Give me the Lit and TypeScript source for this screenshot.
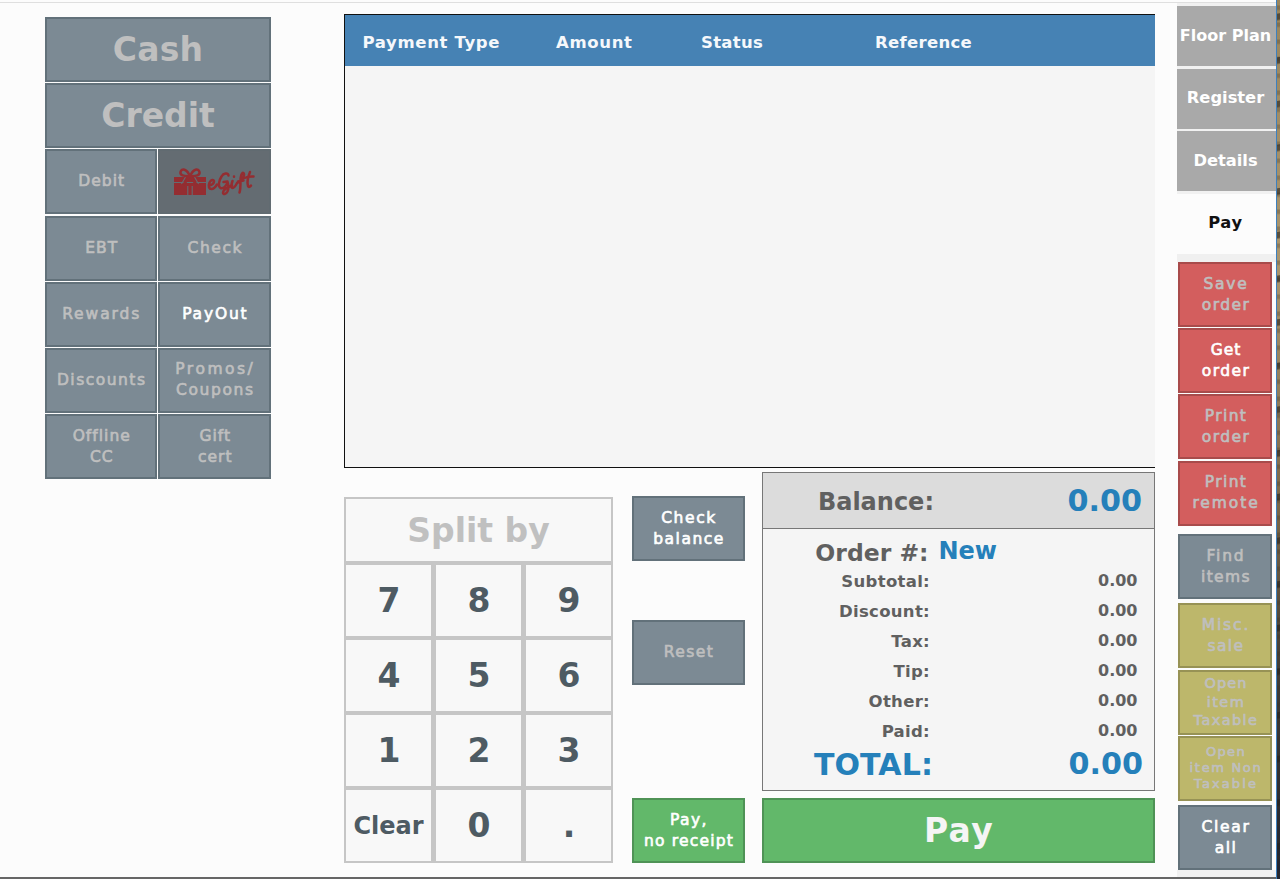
import { LitElement, html, css } from "lit";
import { customElement, property } from "lit/decorators.js";
import { styleMap } from "lit/directives/style-map.js";

type Key = { lines: string[]; tone?: string; on?: boolean; size?: string; icon?: boolean };

const TRACKING: Record<string, number> = {
  Debit: 1, EBT: 1, Check: 1.6, Rewards: 1.9, PayOut: 1.8, Discounts: 1.5, "Promos/": 2.5, Coupons: 1.6,
  Offline: 1, CC: 1, Gift: 1, cert: 1, Save: 1.8, Get: 0.9, remote: 1.9, Find: 1.8, "Misc.": 1.9, Clear: 1.7,
  balance: 1.5, "no receipt": 1.2, Open: 1.1, Cash: 0.2, Credit: 0, "Pay": 1.3,
};

@customElement("pos-button")
class PosButton extends LitElement {
  @property({ type: Array }) lines: string[] = [];
  @property() tone = "slate";
  @property() size = "small";
  @property({ type: Boolean }) on = false;
  @property({ type: Boolean }) icon = false;

  static styles = css`
    :host { display: block; min-width: 0; }
    .btn {
      box-sizing: border-box; width: 100%; height: 100%; border: 2px solid; display: flex;
      flex-direction: column; align-items: center; justify-content: center;
      text-align: center; white-space: nowrap; color: #bfbfbf; padding: 0 0 0 2px;
      font: 15.5px/21px "DejaVu Sans", sans-serif; -webkit-text-stroke: 0.65px currentColor;
    }
    .slate { background: #7c8a94; border-color: #62717a; }
    .red { background: #d35e5e; border-color: #a84b4b; }
    .olive { background: #bdb76b; border-color: #979255; }
    .green { background: #62b86a; border-color: #4f9356; }
    .dark { background: #646c72; border-color: #616b71; padding: 0; }
    .on { color: #fff; }
    .big { font: bold 33px/40px "DejaVu Sans", sans-serif; -webkit-text-stroke: 0; padding-left: 1px; }
    .tight { font-size: 14.5px; line-height: 18.7px; }
    .dense { font-size: 13px; line-height: 16.3px; }
    .big.on { color: #f5f5f5; }
    .gift { display: block; width: 82px; height: 30px; }
  `;

  render() {
    const extra = this.size === "dense" ? 0.7 : 0;
    return html`<div class="btn ${this.tone} ${this.size} ${this.on ? "on" : ""}">
      ${this.icon
        ? html`<svg class="gift" viewBox="0 0 82 30">
            <path fill="#942d31" d="M1 10h32v5H1zM1 16h32v12H1z" />
            <g fill="none" stroke="#646c72" stroke-width="1.1">
              <path d="M14.800 19v9M19.200 19v9M12.500 10l-4 7M21.500 10l4 7" />
            </g>
            <g fill="none" stroke="#942d31" stroke-width="2.5" stroke-linecap="round" stroke-linejoin="round">
              <path d="M17 9.500C13 9 6.500 9 7.500 5S14 1.500 17 9.500C20 1.500 25.500 1 26.500 5S21 9 17 9.500M15.500 10c-1 3-3 5.500-4.500 7M18.500 10c1 3 3 5.500 4.500 7" />
              <path d="M36 18.500c3-.5 5-2 5-4.200s-3-1.500-4.500 1.200c-1.500 4-.5 6.500 2 6.500 2.500 0 4-2 5.500-4.500" />
              <path d="M55.500 8.500c-.5-3-5-2.500-7 1-3 4.500-3.500 10-1 11.500 3 1 6-2 7-6 1 3 1.500 6 0 9.500-1.500 3-4.500 3.500-4.500 1s4-5 9-7M50.500 15l4-.5" />
              <path d="M59.500 14c-1 3-2 7 0 7s3-2 4.500-5M61 9.500v.2" />
              <path d="M66 15.500c4-2 6-8.500 4.500-9.500-2-1-3 4-3 8 0 5 0 9-1 11.500M65 14.500l5.500-1" />
              <path d="M77 5c-2 5-3 11-2 14 .6 1.500 2 1 3-.5M71.500 11c3-1.500 6-1.700 9-1.500" />
            </g>
          </svg>`
        : this.lines.map(
            (l) => html`<span style=${styleMap({ letterSpacing: `${(TRACKING[l] ?? 1.4) + (l === "Taxable" ? extra : extra / 2.5)}px` })}>${l}</span>`
          )}
    </div>`;
  }
}

@customElement("app-root")
class AppRoot extends LitElement {
  static styles = css`
    :host { display: block; }
    .page {
      box-sizing: border-box; width: 1280px; height: 879px; background: #fcfcfc; overflow: hidden;
      display: grid; grid-template-columns: 344px 811px 22px 99px 4px; grid-template-rows: 3px 873.5px 2.5px;
      font: bold 16.5px "DejaVu Sans", sans-serif;
    }
    .rule { grid-column: 1 / 5; border-bottom: 1px solid #dfdfdf; box-sizing: border-box; }
    .foot { grid-column: 1 / 5; grid-row: 3; background: #666; }
    .tenders {
      grid-column: 1; grid-row: 2; padding: 14px 0 0 44.5px; width: 226px; align-content: start;
      display: grid; grid-template-columns: 1fr 1fr; grid-auto-rows: 65px; gap: 1.2px;
    }
    .wide { grid-column: span 2; }
    .main { grid-column: 2; grid-row: 2; padding-top: 11px; display: flex; flex-direction: column; }
    .ledger {
      box-sizing: border-box; height: 454px; background: #f5f5f5; border: 1px solid #111; border-right: 0;
    }
    .head {
      display: grid; grid-template-columns: 193.5px 145px 174px 1fr; padding: 3px 0 0 17.5px; height: 51px;
      box-sizing: border-box; align-items: center; background: #4682b4; color: #f5f8fb; letter-spacing: 0.65px;
    }
    .head .slim { letter-spacing: 0.3px; }
    .lower { display: grid; grid-template-columns: 269px 113px 393px; column-gap: 18px; height: 395px; }
    .pad {
      margin-top: 29px; box-sizing: border-box; height: 366px; padding: 2px; background: #c6c6c6;
      display: grid; grid-template-columns: repeat(3, 85px); grid-template-rows: 62px repeat(4, 71px); gap: 4px 5px;
      color: #4e5b63; font-size: 33px;
    }
    .cell { background: #f8f8f8; display: flex; align-items: center; justify-content: center; padding-left: 1px; }
    .split { grid-column: span 3; color: #c0c0c0; padding: 0; }
    .word { font-size: 24px; padding: 0; }
    .mid {
      display: grid; grid-template-rows: 65px 59px 65px 113px 65px; align-content: start;
      padding-top: 28px; margin: 0 -0.5px 0 0.5px;
    }
    .mid .b { grid-row: 3; }
    .mid .c { grid-row: 5; }
    .right { padding-top: 4px; display: flex; flex-direction: column; }
    .sum { box-sizing: border-box; height: 319px; border: 1px solid #777; background: #f5f5f5; color: #606060; }
    .line {
      display: grid; grid-template-columns: 167px 1fr; height: 30px; align-items: center; padding-right: 16.5px;
      letter-spacing: 0.3px;
    }
    .line span { text-align: right; }
    .line .val { letter-spacing: 0; }
    .line.bal {
      box-sizing: border-box; background: #dcdcdc; border-bottom: 1px solid #777; margin-bottom: 6px; padding-top: 2px;
      height: 56px; grid-template-columns: 171px 1fr; padding-right: 12px; font-size: 24px; letter-spacing: 0;
    }
    .line.order {
      box-sizing: border-box; height: 31px; font-size: 23.5px; grid-template-columns: 165.5px 1fr; column-gap: 10px;
      padding-top: 2px; letter-spacing: 0;
    }
    .line.order .val { text-align: left; font-size: 24px; color: #2580ba; padding-bottom: 4px; }
    .line.total {
      height: 35px; font-size: 30px; color: #2580ba; grid-template-columns: 170px 1fr; padding-right: 11px;
      letter-spacing: 0.1px;
    }
    .val { font-size: 16px; padding-bottom: 2px; }
    .bal .val, .total .val { font-size: 30.2px; color: #2580ba; }
    .bal .val { padding-bottom: 3px; }
    .go { height: 65px; margin-top: 7px; }
    .side { grid-column: 4; grid-row: 2; background: #f1f1f1; padding-top: 3px; display: flex; flex-direction: column; }
    .tab {
      box-sizing: border-box; height: 60px; margin-bottom: 2.5px; background: #a9a9a9; color: #fff; display: flex;
      align-items: center; justify-content: center; white-space: nowrap; padding: 0 2px 2px 0; flex: none;
      font-size: 16.3px;
    }
    .first { font-size: 16px; }
    .now { background: #fcfcfc; color: #111; margin-bottom: 0; letter-spacing: 0.7px; }
    .stack { display: grid; grid-auto-rows: 65px; gap: 1.2px; padding: 8.6px 4px 0 1px; background: #fcfcfc; }
    .top { background: linear-gradient(#f0f0f0 8px, #fcfcfc 8px); }
    .near { padding-top: 4.1px; }
    .last { padding-top: 4.3px; }
    .edge {
      grid-column: 5; grid-row: 1 / 4; border-left: 1px solid #3c80c0;
      background:
        repeating-linear-gradient(170deg, transparent 0 13px, #25211c99 14px 19px, transparent 21px 43px),
        repeating-linear-gradient(#0000 0 5px, #3b302044 6px 9px, #0000 11px 17px),
        linear-gradient(#9a855c, #ab966e 30%, #766346 60%, #443e37 75%, #202431);
    }
  `;

  b(k: Key, cls = "") {
    return html`<pos-button class=${cls} .lines=${k.lines} .tone=${k.tone ?? "slate"} .size=${k.size ?? "small"}
      .on=${!!k.on} .icon=${!!k.icon}></pos-button>`;
  }

  render() {
    const tenders: Key[] = [
      { lines: ["Debit"] }, { lines: [], tone: "dark", icon: true },
      { lines: ["EBT"] }, { lines: ["Check"] },
      { lines: ["Rewards"] }, { lines: ["PayOut"], on: true },
      { lines: ["Discounts"] }, { lines: ["Promos/", "Coupons"] },
      { lines: ["Offline", "CC"] }, { lines: ["Gift", "cert"] },
    ];
    const keys = ["7", "8", "9", "4", "5", "6", "1", "2", "3", "Clear", "0", "."];
    const rows = ["Subtotal:", "Discount:", "Tax:", "Tip:", "Other:", "Paid:"];
    return html`<div class="page">
      <div class="rule"></div>
      <div class="tenders">
        ${this.b({ lines: ["Cash"], size: "big" }, "wide")} ${this.b({ lines: ["Credit"], size: "big" }, "wide")}
        ${tenders.map((t) => this.b(t))}
      </div>
      <div class="main">
        <div class="ledger">
          <div class="head">
            <span>Payment Type</span><span>Amount</span><span class="slim">Status</span><span class="slim">Reference</span>
          </div>
        </div>
        <div class="lower">
          <div class="pad">
            <div class="cell split">Split by</div>
            ${keys.map((k) => html`<div class="cell ${k === "Clear" ? "word" : ""}">${k}</div>`)}
          </div>
          <div class="mid">
            ${this.b({ lines: ["Check", "balance"], on: true })} ${this.b({ lines: ["Reset"] }, "b")}
            ${this.b({ lines: ["Pay,", "no receipt"], on: true, tone: "green" }, "c")}
          </div>
          <div class="right">
            <div class="sum">
              <div class="line bal"><span>Balance:</span><span class="val">0.00</span></div>
              <div class="line order"><span>Order #:</span><span class="val">New</span></div>
              ${rows.map((r) => html`<div class="line"><span>${r}</span><span class="val">0.00</span></div>`)}
              <div class="line total"><span>TOTAL:</span><span class="val">0.00</span></div>
            </div>
            ${this.b({ lines: ["Pay"], on: true, tone: "green", size: "big" }, "go")}
          </div>
        </div>
      </div>
      <div class="side">
        <div class="tab first">Floor Plan</div><div class="tab">Register</div><div class="tab">Details</div>
        <div class="tab now">Pay</div>
        <div class="stack top">
          ${this.b({ lines: ["Save", "order"], tone: "red" })} ${this.b({ lines: ["Get", "order"], tone: "red", on: true })}
          ${this.b({ lines: ["Print", "order"], tone: "red" })} ${this.b({ lines: ["Print", "remote"], tone: "red" })}
        </div>
        <div class="stack">${this.b({ lines: ["Find", "items"] })}</div>
        <div class="stack near">
          ${this.b({ lines: ["Misc.", "sale"], tone: "olive" })}
          ${this.b({ lines: ["Open", "item", "Taxable"], tone: "olive", size: "tight" })}
          ${this.b({ lines: ["Open", "item Non", "Taxable"], tone: "olive", size: "dense" })}
        </div>
        <div class="stack last">${this.b({ lines: ["Clear", "all"], on: true })}</div>
      </div>
      <div class="edge"></div>
      <div class="foot"></div>
    </div>`;
  }
}
